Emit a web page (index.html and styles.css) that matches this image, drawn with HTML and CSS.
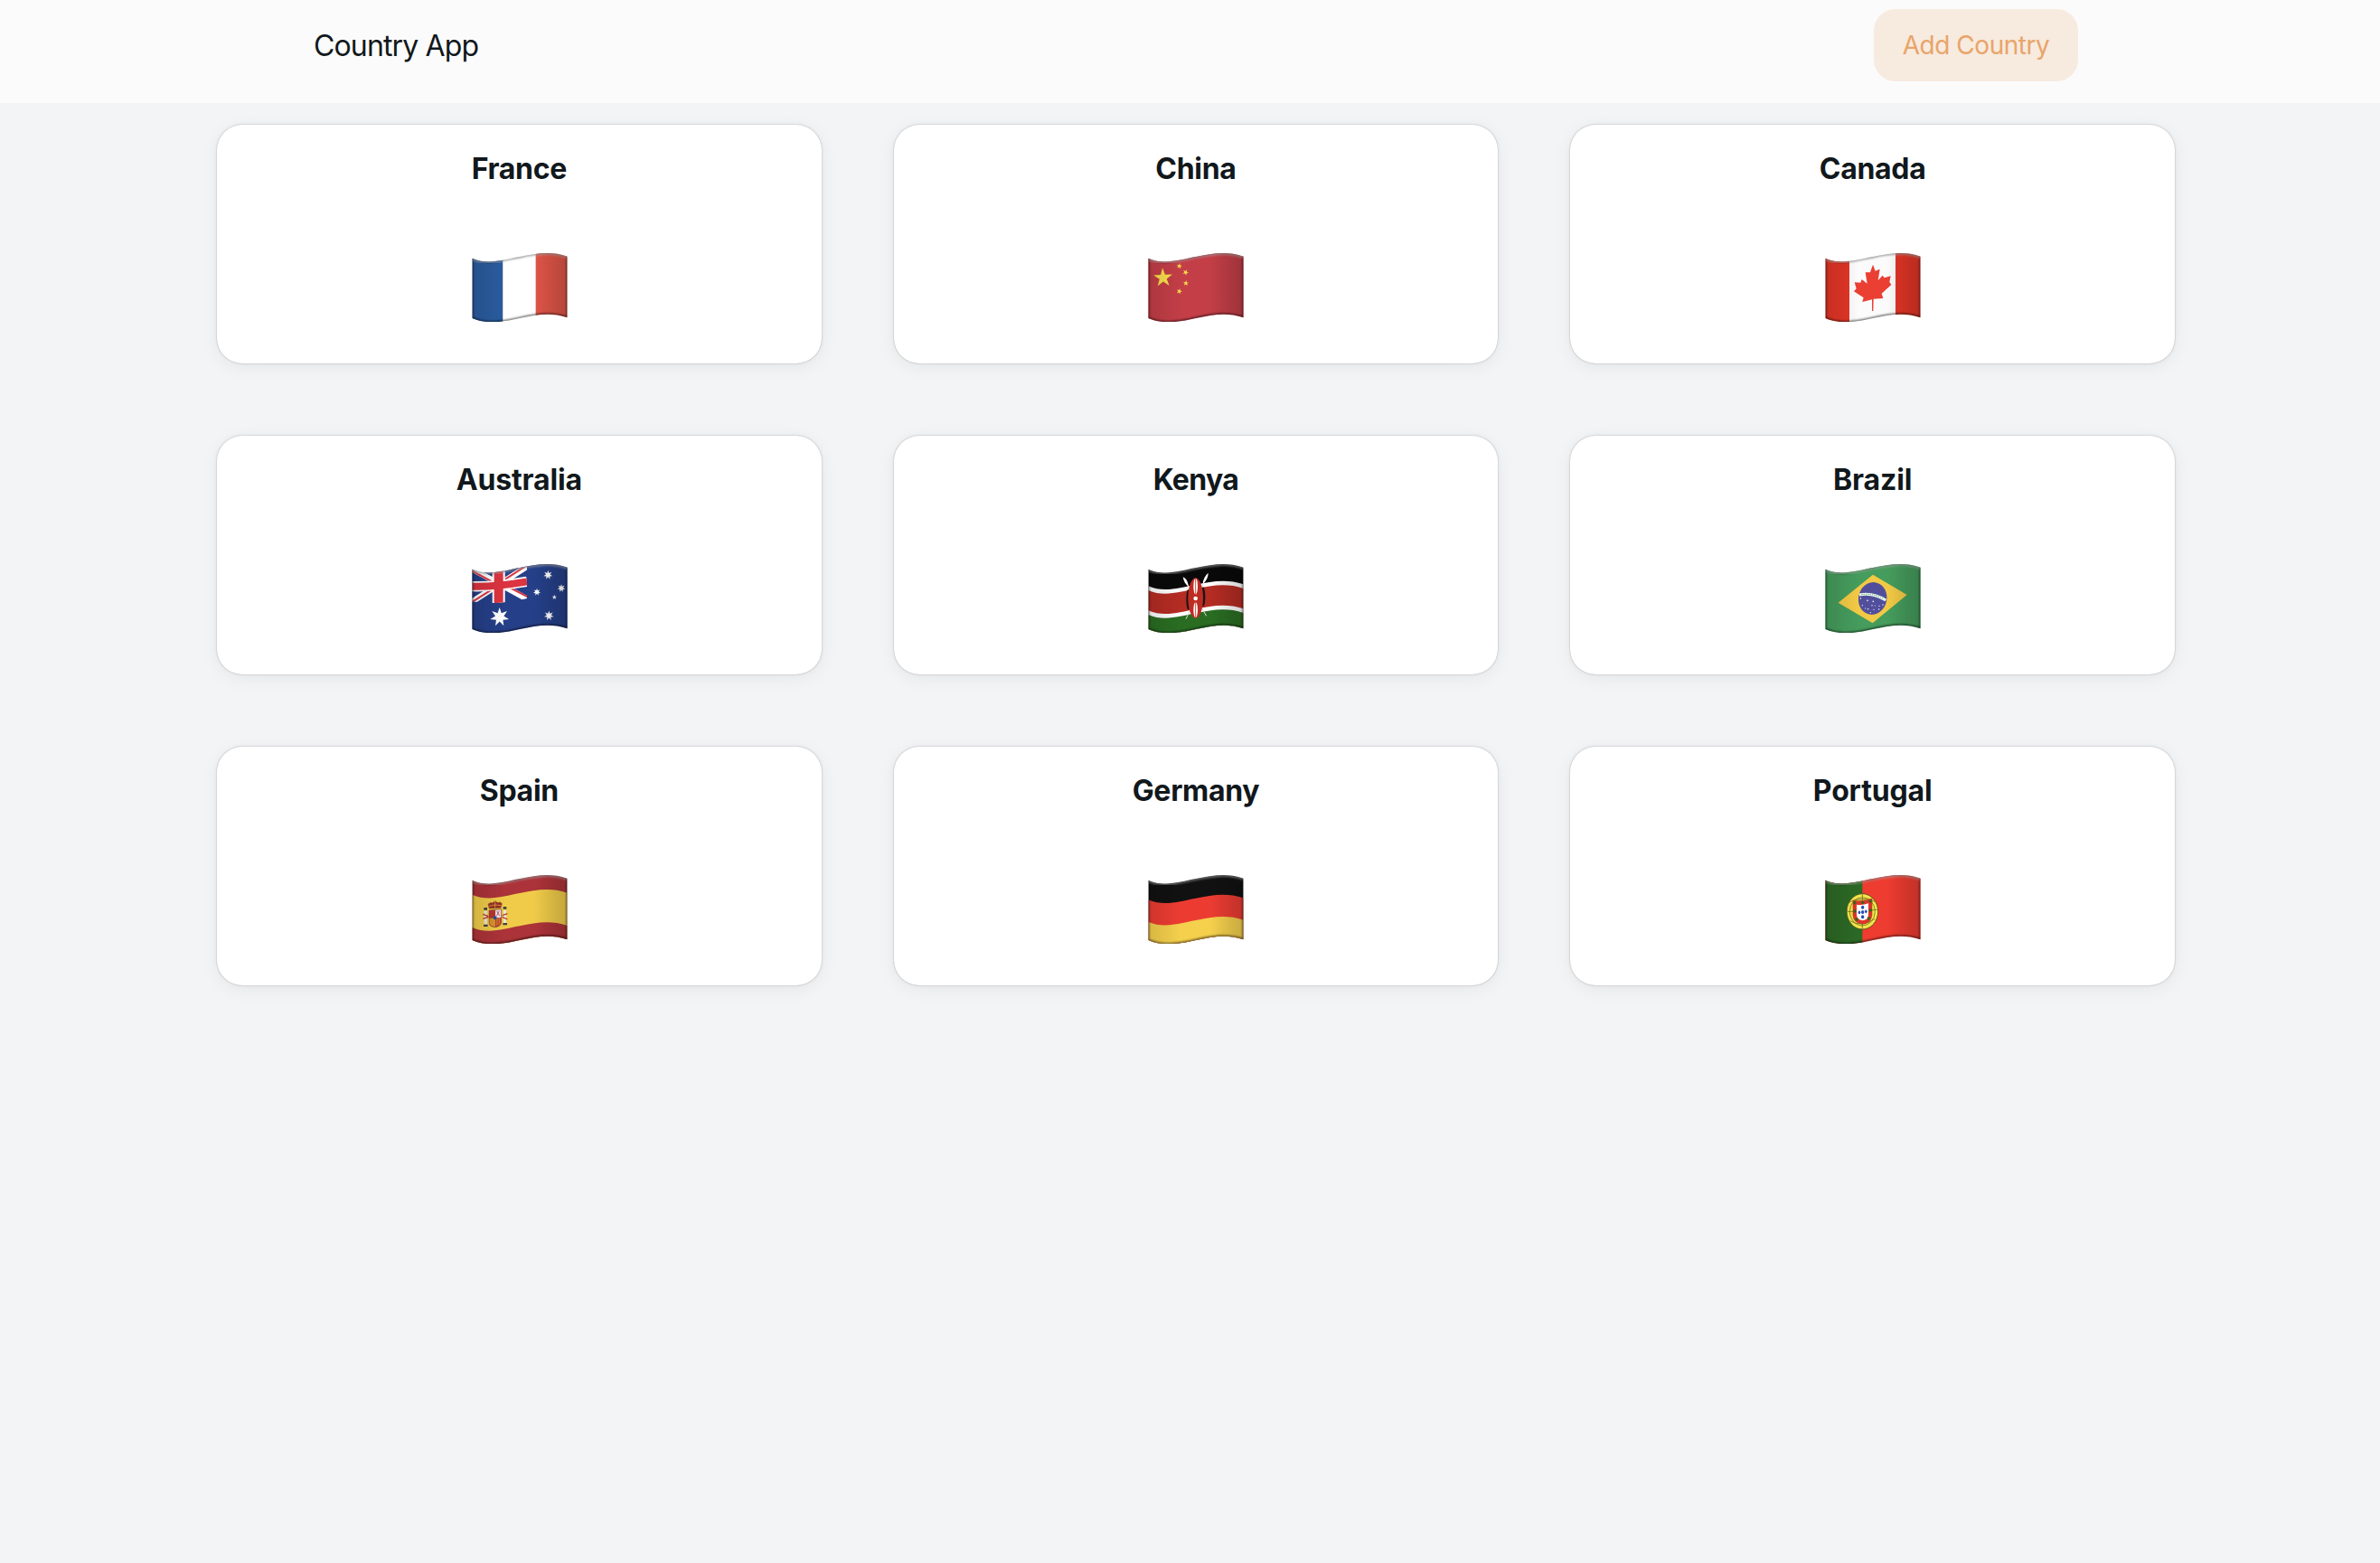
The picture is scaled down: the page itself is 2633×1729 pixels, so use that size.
FILE: index.html
```html
<!DOCTYPE html>
<html lang="en">
<head>
<meta charset="utf-8">
<title>Country App</title>
<link rel="stylesheet" href="styles.css">
</head>
<body>
<svg class="defs" aria-hidden="true">
  <defs>
    <path id="cloth" d="M67,77 C120,100 170,82 225,72 C280,60 330,53 383,71 V274 C330,255 280,264 225,276 C170,288 120,298 67,276 Z"/>
    <path id="wave" d="M67,77 C120,100 170,82 225,72 C280,60 330,53 383,71 V400 H67 Z"/>
    <path id="star5" d="M0,-10 2.25,-3.09 9.51,-3.09 3.63,1.18 5.88,8.09 0,3.82 -5.88,8.09 -3.63,1.18 -9.51,-3.09 -2.25,-3.09Z"/>
    <path id="star7" d="M0,-10 1.95,-4.05 7.82,-6.23 4.39,-1 9.75,2.23 3.52,2.81 4.34,9.01 0,4.5 -4.34,9.01 -3.52,2.81 -9.75,2.23 -4.39,-1 -7.82,-6.23 -1.95,-4.05Z"/>
    <clipPath id="flag-clip"><use href="#cloth"/></clipPath>
    <clipPath id="jack-clip"><path d="M67,77 C120,100 170,82 249,68 V174 C200,184 150,196 67,184Z"/></clipPath>
    <linearGradient id="fold" x1="67" x2="383" y1="0" y2="0" gradientUnits="userSpaceOnUse">
      <stop offset="0" stop-color="#000" stop-opacity=".12"/>
      <stop offset=".35" stop-color="#000" stop-opacity="0"/>
      <stop offset=".65" stop-color="#000" stop-opacity="0"/>
      <stop offset=".9" stop-color="#000" stop-opacity=".14"/>
      <stop offset="1" stop-color="#000" stop-opacity=".18"/>
    </linearGradient>
    <filter id="soft" x="-10%" y="-10%" width="120%" height="120%"><feGaussianBlur stdDeviation="3"/></filter>
    <g id="shade" clip-path="url(#flag-clip)">
      <use href="#cloth" fill="url(#fold)"/>
      <use href="#cloth" fill="none" stroke="#000" stroke-opacity=".6" stroke-width="7" filter="url(#soft)"/>
      <path d="M67,79 C120,102 170,84 225,74 C280,62 330,55 383,73" fill="none" stroke="#fff" stroke-opacity=".42" stroke-width="7" filter="url(#soft)"/>
    </g>
  </defs>
</svg>

<header class="topbar">
  <div class="brand">Country App</div>
  <button class="add" type="button">Add Country</button>
</header>

<main class="grid">
  <article class="card"><h2 class="name">France</h2>
    <svg class="flag" viewBox="60 57 330 232"><g clip-path="url(#flag-clip)">
      <path fill="#2a5c9f" d="M60,50H170V300H60z"/><path fill="#fff" d="M169,50H279V300H169z"/><path fill="#df5547" d="M278,50H390V300H278z"/></g><use href="#shade"/></svg></article>

  <article class="card"><h2 class="name">China</h2>
    <svg class="flag" viewBox="60 57 330 232"><use href="#cloth" fill="#c33e47"/>
      <g fill="#f9df4a"><use href="#star5" transform="translate(116 142) rotate(-3) scale(3.3)"/><use href="#star5" transform="translate(170 103) rotate(12)"/><use href="#star5" transform="translate(191 124) rotate(28) scale(1.05)"/><use href="#star5" transform="translate(192 160) rotate(6)"/><use href="#star5" transform="translate(170 187) rotate(20)"/></g><use href="#shade"/></svg></article>

  <article class="card"><h2 class="name">Canada</h2>
    <svg class="flag" viewBox="60 57 330 232"><use href="#cloth" fill="#fbfbfb"/><g clip-path="url(#flag-clip)" fill="#e23526"><path d="M60,50H147V300H60zM300,50H390V300H300z"/></g>
      <path transform="translate(-3)" fill="#eb3f33" d="M228,98 L236,119 L251,113 L245,151 L260,134 L266,142 L287,136 L283,156 L289,165 L257,194 L262,210 L230,212 L229,252 H225 L225,214 L193,222 L197,208 L165,187 L173,178 L167,157 L187,158 L191,147 L209,161 L203,124 L219,124Z"/><use href="#shade"/></svg></article>

  <article class="card"><h2 class="name wide">Australia</h2>
    <svg class="flag" viewBox="60 57 330 232"><use href="#cloth" fill="#253f88"/>
      <g clip-path="url(#jack-clip)" fill="none">
        <path stroke="#fff" stroke-width="19" d="M62,73 L249,176 M62,188 L249,68"/>
        <path stroke="#dc3440" stroke-width="6" d="M58,78 L155,130 M160,122 L255,171 M62,189 L150,133 M160,121 L255,60"/>
        <path stroke="#fff" stroke-width="34" d="M67,134 Q140,136 249,118"/>
        <path stroke="#fff" stroke-width="42" d="M155,60V191"/>
        <path stroke="#dc3440" stroke-width="24" d="M67,134 Q140,136 249,118"/>
        <path stroke="#dc3440" stroke-width="30" d="M155,60V200"/>
      </g>
      <g fill="#fff"><use href="#star7" transform="translate(158 236) scale(3.2)"/><use href="#star7" transform="translate(319 96) scale(1.55)"/><use href="#star7" transform="translate(282 153) scale(1.25)"/><use href="#star7" transform="translate(363 140) scale(1.35)"/><use href="#star5" transform="translate(340 170) scale(.85)"/><use href="#star7" transform="translate(322 231) scale(1.65)"/></g><use href="#shade"/></svg></article>

  <article class="card"><h2 class="name tight">Kenya</h2>
    <svg class="flag" viewBox="60 57 330 232"><g clip-path="url(#flag-clip)"><use href="#wave" fill="#090909"/><use href="#wave" y="56" fill="#fff"/><use href="#wave" y="70" fill="#b52c23"/><use href="#wave" y="137" fill="#fff"/><use href="#wave" y="151" fill="#2a6d22"/></g>
      <path d="M190,118 L260,232 M260,104 L192,242" stroke="#ddd" stroke-width="3"/>
      <path fill="#fff" d="M182,103 Q196,108 201,133 Q187,128 182,103ZM266,89 Q266,110 248,126 Q249,104 266,89Z"/>
      <ellipse cx="200" cy="178" rx="7" ry="34" fill="#171717"/><ellipse cx="249" cy="169" rx="7" ry="33" fill="#171717"/>
      <ellipse cx="224" cy="173" rx="25" ry="67" fill="#bd2b23"/>
      <g fill="#fff"><ellipse cx="224" cy="134" rx="7" ry="27"/><ellipse cx="224" cy="212" rx="7" ry="26"/><circle cx="224" cy="174" r="7"/></g>
      <path d="M224,107V162M224,185V239" stroke="#bd2b23" stroke-width="2.5"/>
      <use href="#shade"/></svg></article>

  <article class="card"><h2 class="name wide">Brazil</h2>
    <svg class="flag" viewBox="60 57 330 232"><use href="#cloth" fill="#459c5c"/>
      <g transform="translate(-3)"><path fill="#f2c945" d="M228,95 L341,162 L227,256 L113,188Z"/>
      <ellipse cx="227" cy="174" rx="47" ry="54" transform="rotate(12 227 174)" fill="#514f9c"/>
      <path d="M183,162 Q228,153 271,180" fill="none" stroke="#eef8ee" stroke-width="9"/><path d="M190,161 Q228,155 265,176" fill="none" stroke="#55a275" stroke-width="3" stroke-dasharray="4 3"/>
      <g fill="#fff"><circle cx="187" cy="174" r="2"/><circle cx="210" cy="181" r="2.5"/><circle cx="229" cy="184" r="2.5"/><circle cx="225" cy="197" r="2"/><circle cx="203" cy="207" r="1.8"/><circle cx="193" cy="197" r="1.8"/><circle cx="212" cy="209" r="2.2"/><circle cx="231" cy="211" r="1.8"/><circle cx="249" cy="199" r="2"/><circle cx="248" cy="210" r="2"/><circle cx="261" cy="195" r="2"/><circle cx="220" cy="221" r="1.8"/><circle cx="235" cy="198" r="1.5"/></g></g><use href="#shade"/></svg></article>

  <article class="card"><h2 class="name">Spain</h2>
    <svg class="flag" viewBox="60 57 330 232"><g clip-path="url(#flag-clip)"><use href="#wave" fill="#ac3339"/><use href="#wave" y="48" fill="#efcb49"/><use href="#wave" y="157" fill="#ac3339"/></g>
      <path fill="#e9e6df" d="M107,178H116V224H107zM171,176H180V220H171z"/>
      <path fill="#45423e" d="M106,168H117V176H106zM105,224H119V231H105zM170,165H181V173H170zM169,219H183V226H169z"/>
      <path d="M103,190L121,197M103,205L121,199M167,194L184,188M167,199L184,207" stroke="#b33636" stroke-width="4"/>
      <path fill="#b7342f" d="M123,177L164,173V216Q164,230 144,233Q123,232 123,218Z"/>
      <path fill="#eee3e5" d="M144,176L163,174V200L144,203Z"/><path d="M149,180L158,195M157,179L148,196" stroke="#bd5874" stroke-width="3"/>
      <path fill="#d9922d" d="M124,204L144,202V231Q125,230 124,218Z"/><path d="M148,204V228M153,203V227M158,202V224" stroke="#d9922d" stroke-width="2.5"/>
      <circle cx="143" cy="202" r="6" fill="#2b5195"/>
      <path d="M123,177L164,173V216Q164,230 144,233Q123,232 123,218Z" fill="none" stroke="#765028" stroke-width="1.5"/>
      <path fill="#9d2b27" stroke="#795a20" stroke-width="2" d="M124,171L120,157Q127,149 135,153Q143,142 151,152Q161,147 166,155L162,169Z"/>
      <path d="M123,163Q143,156 163,161M143,143V168" fill="none" stroke="#d7a73d" stroke-width="2.5"/><use href="#shade"/></svg></article>

  <article class="card"><h2 class="name">Germany</h2>
    <svg class="flag" viewBox="60 57 330 232"><g clip-path="url(#flag-clip)"><use href="#wave" fill="#111"/><use href="#wave" y="65" fill="#ec3c32"/><use href="#wave" y="138" fill="#f5d04c"/></g><use href="#shade"/></svg></article>

  <article class="card"><h2 class="name wide">Portugal</h2>
    <svg class="flag" viewBox="60 57 330 232"><use href="#cloth" fill="#ee3c30"/><path clip-path="url(#flag-clip)" fill="#2c6925" d="M60,50H190V300H60z"/>
      <g transform="translate(-3)"><ellipse cx="193" cy="181" rx="52" ry="59" fill="#f5e54a" stroke="#49501c" stroke-width="2.5"/>
      <g fill="none" stroke="#5d5b1e" stroke-width="2"><ellipse cx="193" cy="181" rx="42" ry="47"/><path d="M142,181Q193,186 244,174M193,122V240M150,150Q190,130 235,148M152,212Q190,235 235,205"/></g>
      <path fill="#df3529" stroke="#83401c" stroke-width="1.5" d="M162,144Q193,149 225,138V192Q222,221 194,223Q164,219 162,194Z"/>
      <path fill="#fff" d="M174,158Q194,161 213,154V191Q212,209 194,211Q175,208 174,193Z"/>
      <g fill="#254bb5"><ellipse cx="194" cy="167" rx="5" ry="6"/><ellipse cx="194" cy="183" rx="5" ry="6"/><ellipse cx="194" cy="199" rx="5" ry="6"/><ellipse cx="183" cy="184" rx="4" ry="5.5"/><ellipse cx="205" cy="181" rx="4" ry="5.5"/></g>
      <g fill="#34651f"><circle cx="168" cy="152" r="5"/><circle cx="194" cy="151" r="5"/><circle cx="219" cy="147" r="5"/><circle cx="168" cy="180" r="5"/><circle cx="220" cy="177" r="5"/><circle cx="174" cy="207" r="5"/><circle cx="214" cy="204" r="5"/></g></g><use href="#shade"/></svg></article>
</main>
</body>
</html>
```
FILE: styles.css
```css
* { box-sizing: border-box; }
body {
  margin: 0;
  min-height: 100vh;
  background: #f3f4f6;
  color: #11181c;
  font-family: Inter, "Liberation Sans", sans-serif;
}
.defs { display: block; width: 0; height: 0; }
.topbar {
  display: flex;
  justify-content: space-between;
  align-items: flex-start;
  height: 114px;
  padding: 10px 334px 0 347px;
  background: #fbfbfb;
}
.brand {
  font-size: 32px;
  font-weight: 420;
  line-height: 82px;
  letter-spacing: -0.85px;
}
.add {
  width: 226px;
  height: 80px;
  padding: 0;
  border: 0;
  border-radius: 24px;
  background: #f7eadf;
  color: #e9a468;
  font: 420 28px/80px Inter, "Liberation Sans", sans-serif;
  letter-spacing: -0.45px;
  white-space: nowrap;
}
.grid {
  display: grid;
  grid-template-columns: repeat(3, 1fr);
  gap: 80px;
  padding: 24px 227px 0 240px;
}
.card {
  display: flex;
  flex-direction: column;
  align-items: center;
  height: 264px;
  padding-top: 25px;
  border-radius: 28px;
  background: #fff;
  box-shadow:
    0 0 10px rgba(0, 0, 0, 0.02),
    0 4px 20px rgba(0, 0, 0, 0.06),
    0 0 2px rgba(0, 0, 0, 0.3);
}
.name {
  margin: 0 0 68px;
  font-size: 32px;
  font-weight: 700;
  line-height: 48px;
  letter-spacing: -0.3px;
}
.name.wide { letter-spacing: -0.15px; }
.name.tight { letter-spacing: -0.6px; }
.flag { display: block; width: 110px; height: 77.33px; }
.card:nth-child(3n + 1) .flag { margin-left: 2px; }
```
